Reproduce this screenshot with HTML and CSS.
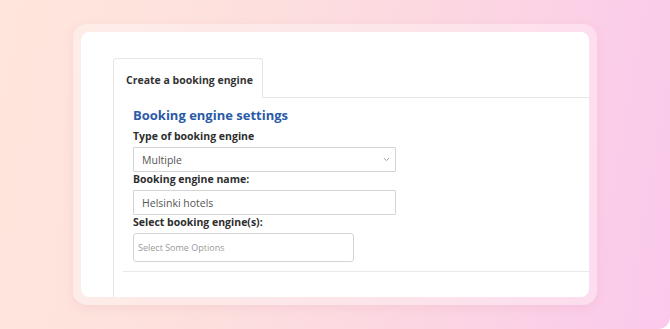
FILE: index.html
```html
<!DOCTYPE html>
<html>
<head>
<meta charset="utf-8">
<link rel="stylesheet" href="styles.css">
</head>
<body>
<div class="stage">
  <div class="frame">
    <div class="card">
      <div class="tabs">
        <div class="tab">Create a booking engine</div>
        <div class="tab-fill"></div>
      </div>
      <div class="panel">
        <h2 class="title">Booking engine settings</h2>
        <label class="label">Type of booking engine</label>
        <div class="field select">
          <span>Multiple</span>
          <svg class="chev" width="7" height="5" viewBox="0 0 7 5"><path d="M0.8 1 L3.5 3.6 L6.2 1" fill="none" stroke="#999" stroke-width="0.9"/></svg>
        </div>
        <label class="label">Booking engine name:</label>
        <div class="field input"><span>Helsinki hotels</span></div>
        <label class="label">Select booking engine(s):</label>
        <div class="field multi"><span>Select Some Options</span></div>
        <div class="sep"></div>
      </div>
    </div>
  </div>
</div>
</body>
</html>
```

FILE: styles.css
```css
html, body {
  margin: 0;
  padding: 0;
}
body {
  width: 670px;
  height: 329px;
  overflow: hidden;
  font-family: "Open Sans", "Noto Sans", sans-serif;
}
.stage {
  width: 670px;
  height: 329px;
  box-sizing: border-box;
  padding: 24px 0 0 73px;
  background: linear-gradient(100deg, #fee6dc 0%, #fde0de 35%, #fcd6e2 65%, #fbc8ec 100%);
  border-radius: 0 0 12px 0;
}
.frame {
  width: 524px;
  height: 281px;
  box-sizing: border-box;
  padding: 8px;
  border-radius: 14px;
  background: rgba(255, 255, 255, 0.32);
  box-shadow: 0 3px 10px rgba(230, 170, 180, 0.25);
}
.card {
  height: 265px;
  background: #fff;
  border-radius: 8px;
  box-sizing: border-box;
  padding: 26px 0 0 32px;
  overflow: hidden;
  display: flex;
  flex-direction: column;
}
.tabs {
  display: flex;
  height: 40px;
}
.tab {
  width: 150px;
  box-sizing: border-box;
  border: 1px solid #e6e6e6;
  border-bottom: none;
  border-radius: 3px 3px 0 0;
  padding: 11px 0 0 12px;
  font-size: 10.5px;
  font-weight: 700;
  color: #333;
  line-height: 20px;
  white-space: nowrap;
}
.tab-fill {
  flex: 1;
  border-bottom: 1px solid #e6e6e6;
}
.panel {
  flex: 1;
  border-left: 1px solid #e6e6e6;
  padding: 8px 0 0 19px;
  display: flex;
  flex-direction: column;
  align-items: flex-start;
}
.title {
  margin: 0;
  font-size: 13px;
  line-height: 18px;
  font-weight: 700;
  color: #2b5aa7;
}
.label {
  font-size: 10.5px;
  line-height: 15px;
  font-weight: 700;
  color: #2e2e2e;
}
.title + .label {
  margin-top: 5px;
}
.field {
  box-sizing: border-box;
  border: 1px solid #d4d4d4;
  border-radius: 1px;
  display: flex;
  align-items: center;
  color: #555;
  font-size: 10.5px;
}
.select {
  width: 263px;
  height: 25px;
  margin-top: 3px;
  padding: 0 5px 0 8px;
  justify-content: space-between;
}
.input {
  width: 263px;
  height: 25px;
  margin-top: 3px;
  padding: 0 8px;
}
.multi {
  width: 221px;
  height: 29px;
  margin-top: 3px;
  padding: 0 4px;
  font-size: 9px;
  color: #9a9a9a;
  border-radius: 3px;
}
.chev {
  display: block;
}
.sep {
  align-self: stretch;
  margin: 9px 0 0 -10px;
  border-top: 1px solid #e9e9e9;
}
```
